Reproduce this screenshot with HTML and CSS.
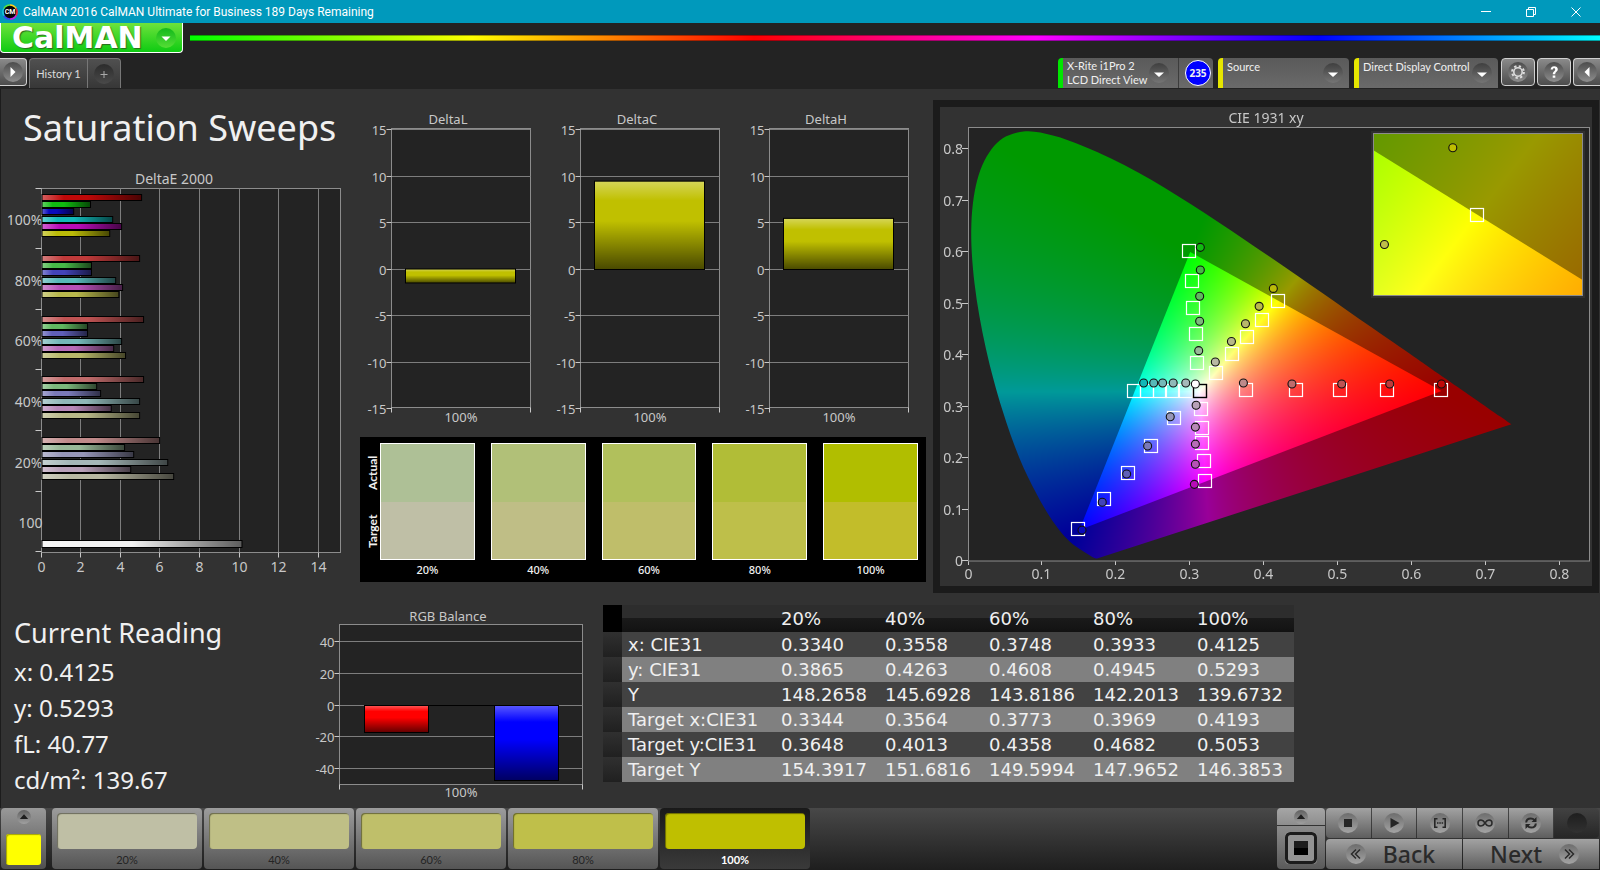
FILE: index.html
```html
<!DOCTYPE html>
<html lang="en">
<head>
    <meta charset="utf-8">
    <title>CalMAN 2016</title>
    <link rel="stylesheet" href="styles.css">
</head>
<body>
    <header class="titlebar">
        <svg class="app-icon" viewBox="0 0 16 16">
            <g fill="none" stroke-width="2">
                <path d="M8 1.2A6.8 6.8 0 0 1 13.9 4.6" stroke="#ffd21f"/>
                <path d="M13.9 4.6A6.8 6.8 0 0 1 13.9 11.4" stroke="#f0283c"/>
                <path d="M13.9 11.4A6.8 6.8 0 0 1 8 14.8" stroke="#c81ee0"/>
                <path d="M8 14.8A6.8 6.8 0 0 1 2.1 11.4" stroke="#3c46f0"/>
                <path d="M2.1 11.4A6.8 6.8 0 0 1 2.1 4.6" stroke="#14c8dc"/>
                <path d="M2.1 4.6A6.8 6.8 0 0 1 8 1.2" stroke="#5ae63c"/>
            </g>
            <circle cx="8" cy="8" r="6.2" fill="#050505"/>
            <text class="app-icon-text" x="8" y="10.4">CM</text>
        </svg>
        <span class="titlebar-text">CalMAN 2016 CalMAN Ultimate for Business 189 Days Remaining</span>
        <div class="window-buttons">
            <button class="window-button" aria-label="Minimize"><svg viewBox="0 0 12 12"><path d="M1 5.5h10"/></svg></button>
            <button class="window-button" aria-label="Restore"><svg viewBox="0 0 12 12"><path d="M1.5 3.5h7v7h-7zM3.5 3.5v-2h7v7h-2"/></svg></button>
            <button class="window-button" aria-label="Close"><svg viewBox="0 0 12 12"><path d="M1.5 1.5l9 9M10.5 1.5l-9 9"/></svg></button>
        </div>
    </header>

    <div class="brand">
        <button class="logo">
            <span>CalMAN</span>
            <svg class="knob knob-green" viewBox="0 0 20 20"><path d="M5.5 8.5h9L10 13z"/></svg>
        </button>
        <div class="rainbow"></div>
    </div>

    <nav class="toolbar">
        <button class="square-button square-left" aria-label="Expand"><svg class="knob" viewBox="0 0 20 20"><path d="M7.5 5v10l5-5z"/></svg></button>
        <div class="tabs">
            <button class="tab">History 1</button>
            <button class="tab tab-add" aria-label="Add history"><svg class="knob knob-dark" viewBox="0 0 20 20"><path d="M9.5 7h1v3h3v1h-3v3h-1v-3h-3v-1h3z"/></svg></button>
        </div>
        <div class="devices">
            <div class="device device-meter">
                <button class="device-name">X-Rite i1Pro 2<br>LCD Direct View</button>
                <svg class="knob knob-dim" viewBox="0 0 20 20"><path d="M5 9.5h10L10 14z"/></svg>
                <div class="level-box"><span class="level">235</span></div>
            </div>
            <div class="device device-source">
                <select class="device-name" aria-label="Source"><option>Source</option></select>
                <svg class="knob knob-dim" viewBox="0 0 20 20"><path d="M5 9.5h10L10 14z"/></svg>
            </div>
            <div class="device device-display">
                <select class="device-name" aria-label="Display"><option>Direct Display Control</option></select>
                <svg class="knob knob-dim" viewBox="0 0 20 20"><path d="M5 9.5h10L10 14z"/></svg>
            </div>
            <div class="tools">
                <button class="square-button" aria-label="Settings">
                    <svg class="knob" viewBox="0 0 20 20">
                        <g fill="none" stroke="#ddd">
                            <circle cx="10" cy="10" r="4.2" stroke-width="1.6"/>
                            <circle cx="10" cy="10" r="5.9" stroke-width="2" stroke-dasharray="2.32 2.32"/>
                        </g>
                    </svg>
                </button>
                <button class="square-button" aria-label="Help">
                    <svg class="knob" viewBox="0 0 20 20"><path d="M6.6 7.5C6.8 5.4 8.2 4.2 10.2 4.2C12.3 4.2 13.8 5.3 13.8 7.2C13.8 9.8 11.2 9.8 11.2 12.2H8.8C8.8 9.3 11.2 9 11.2 7.4C11.2 6.6 10.8 6.2 10.1 6.2C9.3 6.2 8.9 6.7 8.9 7.5ZM8.7 13.4h2.6v2.4h-2.6z"/></svg>
                </button>
                <button class="square-button square-right" aria-label="Collapse"><svg class="knob" viewBox="0 0 20 20"><path d="M12.5 5v10l-5-5z"/></svg></button>
            </div>
        </div>
    </nav>

    <main class="workspace">
        <div class="row row-top">
            <section class="sweeps">
                <h1>Saturation Sweeps</h1>
                <svg id="deltaE" class="chart chart-wide" viewBox="0 0 344 410"></svg>
            </section>

            <section class="deltas">
                <div class="delta-charts">
                    <svg id="deltaL" class="chart" viewBox="0 0 189 320"></svg>
                    <svg id="deltaC" class="chart" viewBox="0 0 189 320"></svg>
                    <svg id="deltaH" class="chart" viewBox="0 0 189 320"></svg>
                </div>
                <div class="swatches">
                    <div class="swatch-side"><span>Actual</span><span>Target</span></div>
                    <div class="swatch"><div class="swatch-color actual-20"></div><span>20%</span></div>
                    <div class="swatch"><div class="swatch-color actual-40"></div><span>40%</span></div>
                    <div class="swatch"><div class="swatch-color actual-60"></div><span>60%</span></div>
                    <div class="swatch"><div class="swatch-color actual-80"></div><span>80%</span></div>
                    <div class="swatch"><div class="swatch-color actual-100"></div><span>100%</span></div>
                </div>
            </section>

            <section class="cie">
                <canvas id="cieCanvas" width="652" height="479"></canvas>
                <svg id="cie" class="chart chart-wide" viewBox="0 0 652 479"></svg>
            </section>
        </div>

        <div class="row row-bottom">
            <section class="reading">
                <h2>Current Reading</h2>
                <p>x: 0.4125</p>
                <p>y: 0.5293</p>
                <p>fL: 40.77</p>
                <p>cd/m²: 139.67</p>
            </section>

            <svg id="rgbBalance" class="chart" viewBox="0 0 300 200"></svg>

            <table class="data">
                <thead>
                    <tr><th class="handle"></th><th class="name"></th><th>20%</th><th>40%</th><th>60%</th><th>80%</th><th class="last">100%</th></tr>
                </thead>
                <tbody>
                    <tr><td class="handle"></td><td>x: CIE31</td><td>0.3340</td><td>0.3558</td><td>0.3748</td><td>0.3933</td><td>0.4125</td></tr>
                    <tr><td class="handle"></td><td>y: CIE31</td><td>0.3865</td><td>0.4263</td><td>0.4608</td><td>0.4945</td><td>0.5293</td></tr>
                    <tr><td class="handle"></td><td>Y</td><td>148.2658</td><td>145.6928</td><td>143.8186</td><td>142.2013</td><td>139.6732</td></tr>
                    <tr><td class="handle"></td><td>Target x:CIE31</td><td>0.3344</td><td>0.3564</td><td>0.3773</td><td>0.3969</td><td>0.4193</td></tr>
                    <tr><td class="handle"></td><td>Target y:CIE31</td><td>0.3648</td><td>0.4013</td><td>0.4358</td><td>0.4682</td><td>0.5053</td></tr>
                    <tr><td class="handle"></td><td>Target Y</td><td>154.3917</td><td>151.6816</td><td>149.5994</td><td>147.9652</td><td>146.3853</td></tr>
                </tbody>
            </table>
        </div>
    </main>

    <footer class="footer">
        <button class="current" aria-label="Current pattern">
            <svg class="knob knob-small" viewBox="0 0 20 20"><path d="M4 13h12l-6-7z"/></svg>
            <span class="current-color"></span>
        </button>
        <div class="patterns">
            <button class="pattern"><span class="pattern-color target-20"></span>20%</button>
            <button class="pattern"><span class="pattern-color target-40"></span>40%</button>
            <button class="pattern"><span class="pattern-color target-60"></span>60%</button>
            <button class="pattern"><span class="pattern-color target-80"></span>80%</button>
            <button class="pattern selected"><span class="pattern-color target-100"></span>100%</button>
        </div>
        <div class="window-mode">
            <button class="mode-up" aria-label="Show patterns"><svg class="knob knob-small" viewBox="0 0 20 20"><path d="M4 13h12l-6-7z"/></svg></button>
            <button class="mode-window" aria-label="Pattern window">
                <svg viewBox="0 0 32 32">
                    <rect x="1.5" y="1.5" width="29" height="29" rx="4" fill="none" stroke="#1c1c1c" stroke-width="3"/>
                    <rect x="9" y="9" width="14" height="14" fill="#000"/>
                    <rect x="9" y="9" width="14" height="7" fill="#1d1d1d"/>
                </svg>
            </button>
        </div>
        <div class="transport">
            <div class="transport-row">
                <button aria-label="Stop"><svg class="knob knob-gray" viewBox="0 0 20 20"><path d="M6 6h8v8H6z"/></svg></button>
                <button aria-label="Play"><svg class="knob knob-gray" viewBox="0 0 20 20"><path d="M6.5 5v10l9-5z"/></svg></button>
                <button aria-label="Read series"><svg class="knob knob-gray" viewBox="0 0 20 20"><path d="M4 5h3.5v1.5H5.6v7h1.9V15H4zM16 5h-3.5v1.5h1.9v7h-1.9V15H16zM7 9.3h1.5v1.5H7zM9.3 9.3h1.5v1.5H9.3zM11.6 9.3h1.5v1.5h-1.5z"/></svg></button>
                <button aria-label="Read continuous"><svg class="knob knob-gray" viewBox="0 0 20 20"><path class="line" d="M10 10C8.500 7.600 7.300 7 6 7a3 3 0 0 0 0 6c1.300 0 2.500-.6 4-3c1.500-2.400 2.700-3 4-3a3 3 0 0 1 0 6c-1.300 0-2.500-.6-4-3z"/></svg></button>
                <button aria-label="Refresh"><svg class="knob knob-gray" viewBox="0 0 20 20"><path class="line line-bold" d="M5.200 9.500C5.300 6.800 7.500 5.400 9.800 5.400c1.600 0 2.800.6 3.700 1.700M14.800 10.500c-.1 2.700-2.300 4.100-4.600 4.100-1.600 0-2.800-.6-3.700-1.700"/><path d="M15.500 4v5h-5zM4.500 16v-5h5z"/></svg></button>
                <button class="off" aria-label="Idle"><svg class="knob knob-off" viewBox="0 0 20 20"></svg></button>
            </div>
            <div class="transport-row transport-nav">
                <button class="back"><svg class="knob knob-gray" viewBox="0 0 20 20"><path class="line" d="M10 5.500L5.500 10l4.500 4.500M14 5.500L9.500 10l4.500 4.500"/></svg><span>Back</span></button>
                <button class="next"><span>Next</span><svg class="knob knob-gray" viewBox="0 0 20 20"><path class="line" d="M6 5.500l4.500 4.500L6 14.500M10 5.500l4.500 4.500-4.500 4.500"/></svg></button>
            </div>
        </div>
    </footer>

    <script src="charts.js"></script>
</body>
</html>
```

FILE: styles.css
```css
* {
    box-sizing: border-box;
}
body {
    margin: 0;
    min-height: 100vh;
    display: flex;
    flex-direction: column;
    background: #232323;
    color: #f0f0f0;
    font-family: "Noto Sans", "Open Sans", sans-serif;
    font-size: 12px;
}
button, select {
    margin: 0;
    padding: 0;
    border: 0;
    background: none;
    color: inherit;
    font: inherit;
}
h1, h2, p {
    margin: 0;
    font-weight: normal;
}
svg {
    display: block;
}

/* Title bar */
.titlebar {
    height: 23px;
    display: flex;
    align-items: center;
    background: #0099bc;
    color: #fff;
    font-family: Roboto, sans-serif;
}
.app-icon {
    width: 16px;
    height: 16px;
    margin: 0 5px 0 2px;
}
.app-icon-text {
    fill: #fff;
    font-size: 7px;
    font-weight: bold;
    text-anchor: middle;
}
.window-buttons {
    display: flex;
    margin-left: auto;
    padding-right: 2px;
}
.window-button {
    width: 45px;
    height: 20px;
    display: flex;
    align-items: center;
    justify-content: center;
}
.window-button svg {
    width: 12px;
    height: 12px;
    fill: none;
    stroke: #fff;
}

/* Round icon backgrounds */
.knob {
    width: 20px;
    height: 20px;
    flex: none;
    border-radius: 50%;
    background: linear-gradient(#4c4c4c, #8e8e8e);
    fill: #fff;
}
.knob-green {
    background: linear-gradient(#12b81b, #55de35);
}
.knob-dark {
    background: linear-gradient(#2c2c2c, #4a4a4a);
    fill: #aaa;
}
.knob-dim {
    background: linear-gradient(#3f3f3f, #757575);
}
.knob-small {
    width: 14px;
    height: 14px;
    background: linear-gradient(#606060, #a0a0a0);
    fill: #1e1e1e;
}
.knob-gray {
    background: linear-gradient(#6d6d6d, #a4a4a4);
    fill: #262626;
}
.knob-off {
    background: linear-gradient(#1e1e1e, #313131);
}
.line {
    fill: none;
    stroke: #2a2a2a;
    stroke-width: 1.5;
}
.line-bold {
    stroke-width: 2;
}

/* Logo row */
.brand {
    height: 35px;
    display: flex;
    align-items: flex-start;
    gap: 7px;
}
.logo {
    width: 183px;
    height: 30px;
    padding: 0 6px 0 11px;
    display: flex;
    align-items: center;
    justify-content: space-between;
    border: 1px solid #fff;
    border-top: 0;
    border-radius: 0 0 4px 4px;
    background: linear-gradient(#6ee23c, #0ecb12);
    color: #fff;
    font-family: "DejaVu Sans", sans-serif;
    font-size: 30px;
    line-height: 28px;
    font-weight: bold;
    text-shadow: 1px 1px 1px #2a6a20;
}
.rainbow {
    flex: 1;
    height: 6px;
    margin-top: 12px;
    border: solid rgba(0, 0, 0, 0.35);
    border-width: 1px 0;
    background: linear-gradient(to right, #0f0, #ff0, #f00, #f0f, #00f, #0ff);
}

/* Tabs and devices */
.toolbar {
    height: 31px;
    display: flex;
    align-items: flex-start;
    font-family: Lato, sans-serif;
    font-size: 11px;
}
.square-button {
    width: 34px;
    height: 28px;
    display: flex;
    align-items: center;
    justify-content: center;
    border: 1px solid #d0d0d0;
    border-radius: 4px;
    background: linear-gradient(#8a8a8a, #4c4c4c);
}
.square-left {
    width: 27px;
    border-left: 0;
    border-radius: 0 4px 4px 0;
}
.square-right {
    width: 27px;
    border-right: 0;
    border-radius: 4px 0 0 4px;
}
.tabs {
    display: flex;
    height: 30px;
    margin-left: 2px;
    border: 1px solid #777;
    border-bottom: 0;
    border-radius: 4px 4px 0 0;
    background: linear-gradient(#505050, #373737);
}
.tab {
    width: 57px;
    color: #ddd;
}
.tab-add {
    width: 33px;
    display: flex;
    align-items: center;
    justify-content: center;
    border-left: 1px solid #777;
}
.devices {
    display: flex;
    align-items: flex-start;
    gap: 5px;
    margin-left: auto;
}
.device {
    height: 30px;
    display: flex;
    align-items: center;
    border-left: 5px solid #e6e600;
    border-radius: 4px 4px 0 0;
    background: linear-gradient(#5a5a5a, #6a6a6a);
}
.device-name {
    flex: 1;
    align-self: stretch;
    padding-left: 4px;
    text-align: left;
    line-height: 14px;
    white-space: nowrap;
    appearance: none;
}
select.device-name {
    min-width: 0;
    padding-bottom: 13px;
}
.device-meter {
    width: 155px;
    border-left-color: #00e600;
}
.level-box {
    margin-left: 9px;
    padding: 2px 2px 2px 6px;
    border-left: 1px solid #3c3c3c;
}
.level {
    display: block;
    width: 26px;
    height: 26px;
    border: 1px solid #fff;
    border-radius: 50%;
    background: #00f;
    font-family: "Noto Sans", sans-serif;
    font-size: 10px;
    font-weight: bold;
    line-height: 24px;
    text-align: center;
}
.device-source {
    width: 131px;
    padding-right: 6px;
}
.device-display {
    width: 144px;
    padding-right: 6px;
}
.tools {
    display: flex;
    gap: 2px;
    margin-left: -2px;
}

/* Workspace */
.workspace {
    flex: 1;
    border-left: 1px solid #1c1c1c;
    background: #323232;
}
.row {
    display: grid;
}
.row-top {
    grid-template-columns: 344fr 588fr 667fr;
}
.row-bottom {
    grid-template-columns: 299fr 300fr 1000fr;
    align-items: start;
}
.chart {
    width: 100%;
}
h1 {
    padding: 15px 0 18px 22px;
    font-size: 36px;
    line-height: 48px;
}
.deltas {
    padding-top: 20px;
}
.delta-charts {
    display: grid;
    grid-template-columns: repeat(3, 1fr);
    margin-right: 21px;
}
.swatches {
    display: flex;
    gap: 16px;
    margin: 8px 7px 0 15px;
    padding: 6px 8px 5px 4px;
    background: #000;
}
.swatch-side {
    display: flex;
    flex-direction: row-reverse;
    justify-content: space-around;
    width: 16px;
    height: 117px;
    margin-right: -16px;
    padding-right: 1px;
    writing-mode: vertical-rl;
    transform: rotate(180deg);
    line-height: 16px;
    font-family: Lato, sans-serif;
    font-weight: bold;
}
.swatch {
    flex: 1;
    text-align: center;
    line-height: 15px;
    font-size: 11px;
    font-weight: 500;
}
.swatch-color {
    height: 117px;
    margin-bottom: 2px;
    border: 1px solid #fff;
}
.actual-20 { background: linear-gradient(#aec096 50%, #bfbfa6 50%); }
.actual-40 { background: linear-gradient(#b1c078 50%, #bfbe86 50%); }
.actual-60 { background: linear-gradient(#b1c05c 50%, #bfbe6a 50%); }
.actual-80 { background: linear-gradient(#b1bd37 50%, #bebf4a 50%); }
.actual-100 { background: linear-gradient(#b1be00 50%, #c2bd2a 50%); }

.cie {
    display: grid;
    align-self: start;
    margin: 11px 1px 0 0;
    border: 7px solid #1b1b1b;
}
.cie > * {
    grid-area: 1 / 1;
    width: 100%;
}

/* Chart parts */
.plot { fill: #232323; stroke: #8c8c8c; }
.grid { stroke: #7d7d7d; }
.tick { stroke: #c8c8c8; }
.label { fill: #c8c8c8; font-size: 13px; }
.chart-wide .label { font-size: 14px; }
.end { text-anchor: end; }
.mid { text-anchor: middle; }
.zero { stroke: #000; }
.target { fill: none; stroke: #fff; stroke-width: 1.2; }
.white-point { fill: none; stroke: #000; stroke-width: 1.4; }
.measured { stroke: #111; stroke-width: 1.1; }
.frame { fill: none; stroke: #8c8c8c; }

/* Reading and table */
.reading {
    padding: 19px 0 0 13px;
    font-size: 24px;
    line-height: 36px;
}
.reading h2 {
    font-size: 27px;
    line-height: 42px;
}
#rgbBalance {
    margin-top: 11px;
}
.data {
    width: 691px;
    margin: 12px 0 0 3px;
    table-layout: fixed;
    border-collapse: collapse;
    font-family: "DejaVu Sans", sans-serif;
    font-size: 18px;
}
.data th, .data td {
    height: 25px;
    padding: 0;
    font-weight: normal;
    text-align: left;
    line-height: 25px;
    white-space: nowrap;
}
.data th {
    width: 104px;
    height: 27px;
    background: linear-gradient(#2d2d2d 48%, #1a1a1a 50%, #121212);
}
.data th.name {
    width: 159px;
}
.data th.last {
    width: 97px;
}
.data th.handle {
    width: 19px;
    background: #000;
}
.data td:nth-child(2) {
    padding-left: 6px;
}
.data td {
    background: #424242;
}
.data tr:nth-child(even) td {
    background: #808080;
}
.data tr td.handle {
    background: linear-gradient(#303030, #202020);
}

/* Footer */
.footer {
    height: 62px;
    display: flex;
    align-items: flex-start;
    padding-left: 1px;
    background: linear-gradient(#484848, #1e1e1e);
}
.current {
    width: 45px;
    height: 61px;
    padding-top: 2px;
    display: flex;
    flex-direction: column;
    align-items: center;
    gap: 10px;
    border-radius: 4px;
    background: linear-gradient(#999, #505050);
}
.current-color {
    width: 35px;
    height: 31px;
    border-radius: 3px;
    background: #ff0;
    box-shadow: inset 1px 1px 1px #a5a500;
}
.patterns {
    display: flex;
    gap: 2px;
    margin-left: 6px;
}
.pattern {
    width: 150px;
    height: 61px;
    padding: 5px 5px 0;
    border-radius: 4px;
    background: linear-gradient(#9c9c9c, #555);
    color: #242424;
    font-family: Lato, sans-serif;
    font-size: 11px;
    line-height: 18px;
}
.pattern-color {
    display: block;
    height: 36px;
    margin-bottom: 2px;
    border-radius: 4px;
    box-shadow: inset 1px 1px 1px rgba(0, 0, 0, 0.45);
}
.pattern.selected {
    background: linear-gradient(#191919, #3a3a3a);
    color: #fff;
    font-weight: bold;
}
.target-20 { background: #bfbfa5; }
.target-40 { background: #bfbf86; }
.target-60 { background: #bfbf6a; }
.target-80 { background: #bfbf4a; }
.target-100 { background: #bfbf00; }

.window-mode {
    width: 48px;
    margin-left: auto;
}
.mode-up, .mode-window {
    width: 48px;
    display: flex;
    justify-content: center;
    align-items: center;
}
.mode-up {
    height: 18px;
    border-bottom: 1px solid #333;
    border-radius: 4px 4px 0 0;
    background: linear-gradient(#a6a6a6, #8e8e8e);
}
.mode-window {
    height: 43px;
    border-radius: 0 0 4px 4px;
    background: linear-gradient(#8c8c8c, #5a5a5a);
}
.mode-window svg {
    width: 32px;
    height: 32px;
    background: #939393;
    border-radius: 4px;
}
.transport {
    width: 273px;
    margin: 0 1px;
    display: flex;
    flex-direction: column;
    gap: 1px;
}
.transport-row {
    display: flex;
    gap: 1px;
}
.transport button {
    flex: 1;
    height: 30px;
    display: flex;
    align-items: center;
    justify-content: center;
    background: linear-gradient(#a2a2a2, #5e5e5e);
}
.transport button:first-child {
    border-radius: 4px 0 0 4px;
}
.transport .off {
    border-radius: 0 4px 4px 0;
    background: linear-gradient(#424242, #262626);
}
.transport-nav button {
    gap: 17px;
    color: #2a2a2a;
    font-size: 23px;
    font-weight: 500;
    line-height: 28px;
}
.transport-nav .back {
    padding-right: 7px;
}
.transport-nav .next {
    padding-left: 7px;
}
```

FILE: charts.js
```js
const NS = 'http://www.w3.org/2000/svg';

function add(svg, name, attrs, text) {
    const el = document.createElementNS(NS, name);
    for (const key in attrs) el.setAttribute(key, attrs[key]);
    if (text !== undefined) el.textContent = text;
    svg.appendChild(el);
    return el;
}

function line(svg, x1, y1, x2, y2, cls) {
    add(svg, 'line', { x1, y1, x2, y2, class: cls });
}

function label(svg, x, y, text, align) {
    add(svg, 'text', { x, y, class: 'label ' + (align || '') }, text);
}

// Highlight at the start of a bar, shadow at its end
function addShade(svg, id, vertical) {
    const grad = add(svg, 'linearGradient', vertical ? { id, x1: 0, y1: 0, x2: 0, y2: 1 } : { id });
    add(grad, 'stop', { offset: 0, 'stop-color': '#fff', 'stop-opacity': 0.35 });
    add(grad, 'stop', { offset: 0.22, 'stop-color': '#fff', 'stop-opacity': 0 });
    add(grad, 'stop', { offset: 0.45, 'stop-color': '#000', 'stop-opacity': 0 });
    add(grad, 'stop', { offset: 1, 'stop-color': '#000', 'stop-opacity': 0.62 });
}

function bar(svg, x, y, width, height, color, shade) {
    add(svg, 'rect', { x, y, width, height, fill: color });
    add(svg, 'rect', { x, y, width, height, fill: 'url(#' + shade + ')', stroke: '#000' });
}

// DeltaE 2000, horizontal bars
const deltaE = [
    ['100%', [5.03, 2.45, 1.6, 3.57, 4.02, 3.42], ['#bf0808', '#10bb10', '#0a0abb', '#12b8b8', '#b80cb8', '#bbbb08']],
    ['80%', [4.93, 2.5, 2.5, 3.72, 4.07, 3.88], ['#bf3a3a', '#47b847', '#4343b8', '#57b8b8', '#b751b7', '#b8b84c']],
    ['60%', [5.13, 2.3, 2.3, 4.02, 3.62, 4.22], ['#bf5353', '#60b860', '#5f5fb8', '#74b8b8', '#b86cb8', '#b8b86a']],
    ['40%', [5.13, 2.76, 2.96, 4.93, 3.5, 4.93], ['#bf6b6b', '#7cb87c', '#7a7ab8', '#90b8b8', '#b888b8', '#b8b888']],
    ['20%', [5.94, 4.17, 4.63, 6.35, 4.48, 6.65], ['#bf8a8a', '#98b898', '#9696b8', '#a5b8b8', '#b8a0b8', '#b8b8a2']]
];

function drawDeltaE() {
    const svg = document.getElementById('deltaE');
    const left = 40.5, top = 18.5, unit = 19.8, group = 60.65;
    addShade(svg, 'shadeH', false);
    label(svg, 173, 14, 'DeltaE 2000', 'mid');
    add(svg, 'rect', { x: left, y: top, width: 299, height: 364, class: 'plot' });
    for (let v = 0; v <= 14; v += 2) {
        const x = Math.round(left + v * unit) - 0.5;
        if (v) line(svg, x, top, x, top + 364, 'grid');
        line(svg, x, top + 364, x, top + 369, 'tick');
        label(svg, x, 402, v, 'mid');
    }
    for (let i = 0; i <= 6; i++) {
        const y = Math.round(top + i * group) - 0.5;
        line(svg, left - 6, y, left, y, 'tick');
    }
    deltaE.forEach(([name, values, colors], i) => {
        label(svg, left + 1, 55 + i * group, name, 'end');
        values.forEach((v, j) => {
            const y = 24.5 + Math.round(i * 60.8) + Math.round(j * 7.2);
            bar(svg, left + 0.5, y, v * unit, 6, colors[j], 'shadeH');
        });
    });
    label(svg, left + 1, 358, '100', 'end');
    bar(svg, left + 0.5, 370.5, 10.1 * unit, 7, '#f2f2f2', 'shadeH');
}

// DeltaL / DeltaC / DeltaH
function drawDelta(id, value) {
    const svg = document.getElementById(id);
    const left = 46.5, top = 19.5, zero = 160.5, unit = 9.3;
    addShade(svg, id + 'Shade', true);
    label(svg, 103, 15, id[0].toUpperCase() + id.slice(1), 'mid');
    add(svg, 'rect', { x: left, y: top, width: 139, height: 279, class: 'plot' });
    for (let v = -15; v <= 15; v += 5) {
        const y = Math.round(zero - v * unit) - 0.5;
        if (v > -15) line(svg, left, y, left + 139, y, 'grid');
        line(svg, left - 5, y, left, y, 'tick');
        label(svg, left - 5, y + 5, v, 'end');
    }
    line(svg, left, top + 279, left, top + 284, 'tick');
    line(svg, left + 139, top + 279, left + 139, top + 284, 'tick');
    label(svg, 116, 313, '100%', 'mid');
    const h = Math.abs(value) * unit;
    bar(svg, left + 14, value > 0 ? zero - h : zero - 0.5, 110, h, '#c0c000', id + 'Shade');
}

function drawRgb() {
    const svg = document.getElementById('rgbBalance');
    const left = 39.5, top = 20.5, zero = 101.5, unit = 1.59;
    addShade(svg, 'shadeRgb', true);
    label(svg, 148, 17, 'RGB Balance', 'mid');
    add(svg, 'rect', { x: left, y: top, width: 243, height: 160, class: 'plot' });
    for (let v = -40; v <= 40; v += 20) {
        const y = Math.round(zero - v * unit) - 0.5;
        line(svg, left, y, left + 243, y, 'grid');
        line(svg, left - 5, y, left, y, 'tick');
        label(svg, left - 5, y + 5, v, 'end');
    }
    line(svg, left, top + 160, left, top + 165, 'tick');
    line(svg, left + 243, top + 160, left + 243, top + 165, 'tick');
    label(svg, 161, 193, '100%', 'mid');
    line(svg, 64, zero, 259, zero, 'zero');
    bar(svg, 64.5, zero, 64, 27, '#f00', 'shadeRgb');
    bar(svg, 194.5, zero, 64, 75, '#00f', 'shadeRgb');
}

// CIE 1931 spectral locus
const locus = [
    [.1741, .0050], [.1726, .0048], [.1714, .0051], [.1689, .0069], [.1644, .0109], [.1566, .0177],
    [.1440, .0297], [.1355, .0399], [.1241, .0578], [.1096, .0868], [.0913, .1327], [.0687, .2007],
    [.0454, .2950], [.0235, .4127], [.0082, .5384], [.0039, .6548], [.0139, .7502], [.0389, .8120],
    [.0743, .8338], [.1142, .8262], [.1547, .8059], [.1929, .7816], [.2296, .7543], [.2658, .7243],
    [.3016, .6923], [.3373, .6589], [.3731, .6245], [.4087, .5896], [.4441, .5547], [.4788, .5202],
    [.5125, .4866], [.5448, .4544], [.5752, .4242], [.6029, .3965], [.6270, .3725], [.6658, .3340],
    [.6915, .3083], [.7190, .2809], [.7347, .2653]
];
const gamut = [[.64, .33], [.3, .6], [.15, .06]];

const mainView = {
    left: 28.5, top: 20.5, width: 621, height: 433.5,
    x: v => 28.5 + v * 739,
    y: v => 454 - v * 515,
    vx: px => (px - 28.5) / 739,
    vy: py => (454 - py) / 515
};
const zoomView = {
    left: 433.5, top: 26.5, width: 209, height: 162,
    x: v => 537 + (v - .4193) * 3560,
    y: v => 107.5 - (v - .5053) * 2780,
    vx: px => .4193 + (px - 537) / 3560,
    vy: py => .5053 - (py - 107.5) / 2780
};

function xyToRgb(x, y) {
    y = Math.max(y, 0.0001);
    const X = x / y, Z = (1 - x - y) / y;
    const rgb = [
        3.2406 * X - 1.5372 - 0.4986 * Z,
        -0.9689 * X + 1.8758 + 0.0415 * Z,
        0.0557 * X - 0.2040 + 1.0570 * Z
    ].map(c => Math.max(c, 0));
    const max = Math.max(...rgb);
    return rgb.map(c => 255 * c / max);
}

function colorField(view, dim) {
    const c = document.createElement('canvas');
    c.width = 652;
    c.height = 479;
    const ctx = c.getContext('2d');
    const img = ctx.createImageData(c.width, c.height);
    const x1 = view.left + view.width, y1 = view.top + view.height;
    for (let py = Math.floor(view.top); py < y1; py++) {
        for (let px = Math.floor(view.left); px < x1; px++) {
            const rgb = xyToRgb(view.vx(px + 0.5), view.vy(py + 0.5));
            const i = 4 * (py * c.width + px);
            img.data[i] = rgb[0] * dim;
            img.data[i + 1] = rgb[1] * dim;
            img.data[i + 2] = rgb[2] * dim;
            img.data[i + 3] = 255;
        }
    }
    ctx.putImageData(img, 0, 0);
    return c;
}

// Catmull-Rom curve through the locus points
function clipTo(ctx, view, points) {
    const p = points.map(([x, y]) => [view.x(x), view.y(y)]);
    ctx.beginPath();
    ctx.moveTo(p[0][0], p[0][1]);
    for (let i = 0; i < p.length - 1; i++) {
        const a = p[Math.max(i - 1, 0)], b = p[i], c = p[i + 1], d = p[Math.min(i + 2, p.length - 1)];
        ctx.bezierCurveTo(
            b[0] + (c[0] - a[0]) / 6, b[1] + (c[1] - a[1]) / 6,
            c[0] - (d[0] - b[0]) / 6, c[1] - (d[1] - b[1]) / 6,
            c[0], c[1]
        );
    }
    ctx.closePath();
    ctx.clip();
}

function clipTriangle(ctx, view) {
    ctx.beginPath();
    gamut.forEach(([x, y]) => ctx.lineTo(view.x(x), view.y(y)));
    ctx.closePath();
    ctx.clip();
}

function drawCieColors() {
    const ctx = document.getElementById('cieCanvas').getContext('2d');
    ctx.fillStyle = '#232323';
    ctx.fillRect(mainView.left, mainView.top, mainView.width, mainView.height);

    ctx.save();
    clipTo(ctx, mainView, locus);
    ctx.drawImage(colorField(mainView, 0.6), 0, 0);
    ctx.restore();
    ctx.save();
    clipTriangle(ctx, mainView);
    ctx.drawImage(colorField(mainView, 1), 0, 0);
    ctx.restore();

    ctx.fillStyle = '#2f2f2f';
    ctx.fillRect(431, 24, 214, 167);
    ctx.drawImage(colorField(zoomView, 0.6), 0, 0);
    ctx.save();
    ctx.beginPath();
    ctx.rect(zoomView.left, zoomView.top, zoomView.width, zoomView.height);
    ctx.clip();
    clipTriangle(ctx, zoomView);
    ctx.drawImage(colorField(zoomView, 1), 0, 0);
    ctx.restore();
}

const targets = [
    [.639, .332], [.566, .332], [.5027, .332], [.443, .332], [.376, .332],
    [.298, .602], [.302, .544], [.304, .491], [.3074, .440], [.309, .385],
    [.148, .062], [.1834, .1204], [.216, .1715], [.247, .2226], [.2785, .277],
    [.2235, .3295], [.2415, .3295], [.259, .3295], [.276, .3295], [.294, .3295],
    [.3195, .1553], [.318, .194], [.316, .2285], [.316, .2576], [.3146, .2945],
    [.4193, .5053], [.3969, .4682], [.3773, .4358], [.3564, .4013], [.3344, .3648]
];

// Same order as the colours in deltaE: red, green, blue, cyan, magenta, yellow
const measured = [
    [[.640, .3437], [.3137, .609], [.1536, .060], [.237, .3456], [.3056, .1488], [.4125, .5293]],
    [[.570, .3437], [.3137, .565], [.181, .114], [.2506, .3456], [.307, .188], [.3933, .4945]],
    [[.505, .3437], [.3128, .514], [.214, .169], [.2627, .3456], [.307, .227], [.3748, .4608]],
    [[.4377, .3437], [.3128, .4654], [.2424, .2233], [.277, .3456], [.307, .260], [.3558, .4263]],
    [[.372, .3456], [.3115, .4084], [.273, .280], [.294, .3456], [.308, .3023], [.3340, .3865]]
];

function square(svg, view, [x, y], cls) {
    add(svg, 'rect', { x: Math.round(view.x(x)) - 6.5, y: Math.round(view.y(y)) - 6.5, width: 13, height: 13, class: cls });
}

function dot(svg, view, [x, y], fill) {
    add(svg, 'circle', { cx: view.x(x), cy: view.y(y), r: 4, fill, class: 'measured' });
}

function drawCie() {
    const svg = document.getElementById('cie');
    label(svg, 326, 16, 'CIE 1931 xy', 'mid');
    for (let i = 0; i <= 8; i++) {
        const x = Math.round(mainView.x(i / 10)) - 0.5, y = Math.round(mainView.y(i / 10)) - 0.5;
        line(svg, x, 454, x, 458, 'tick');
        line(svg, 22, y, 28, y, 'tick');
        label(svg, x, 472, i / 10, 'mid');
        label(svg, 23, y + 5, i / 10, 'end');
    }
    targets.forEach(p => square(svg, mainView, p, 'target'));
    square(svg, mainView, [.3127, .3295], 'white-point');
    measured.forEach((group, i) => group.forEach((p, j) => dot(svg, mainView, p, deltaE[i][2][j])));
    dot(svg, mainView, [.307, .3437], '#fff');
    square(svg, zoomView, [.4193, .5053], 'target');
    dot(svg, zoomView, [.4125, .5293], '#bfbf00');
    dot(svg, zoomView, [.3933, .4945], '#bfbf4a');
    [mainView, zoomView].forEach(v => add(svg, 'rect', { x: v.left, y: v.top, width: v.width, height: v.height, class: 'frame' }));
}

drawDeltaE();
drawDelta('deltaL', -1.5);
drawDelta('deltaC', 9.5);
drawDelta('deltaH', 5.5);
drawRgb();
drawCieColors();
drawCie();
```
